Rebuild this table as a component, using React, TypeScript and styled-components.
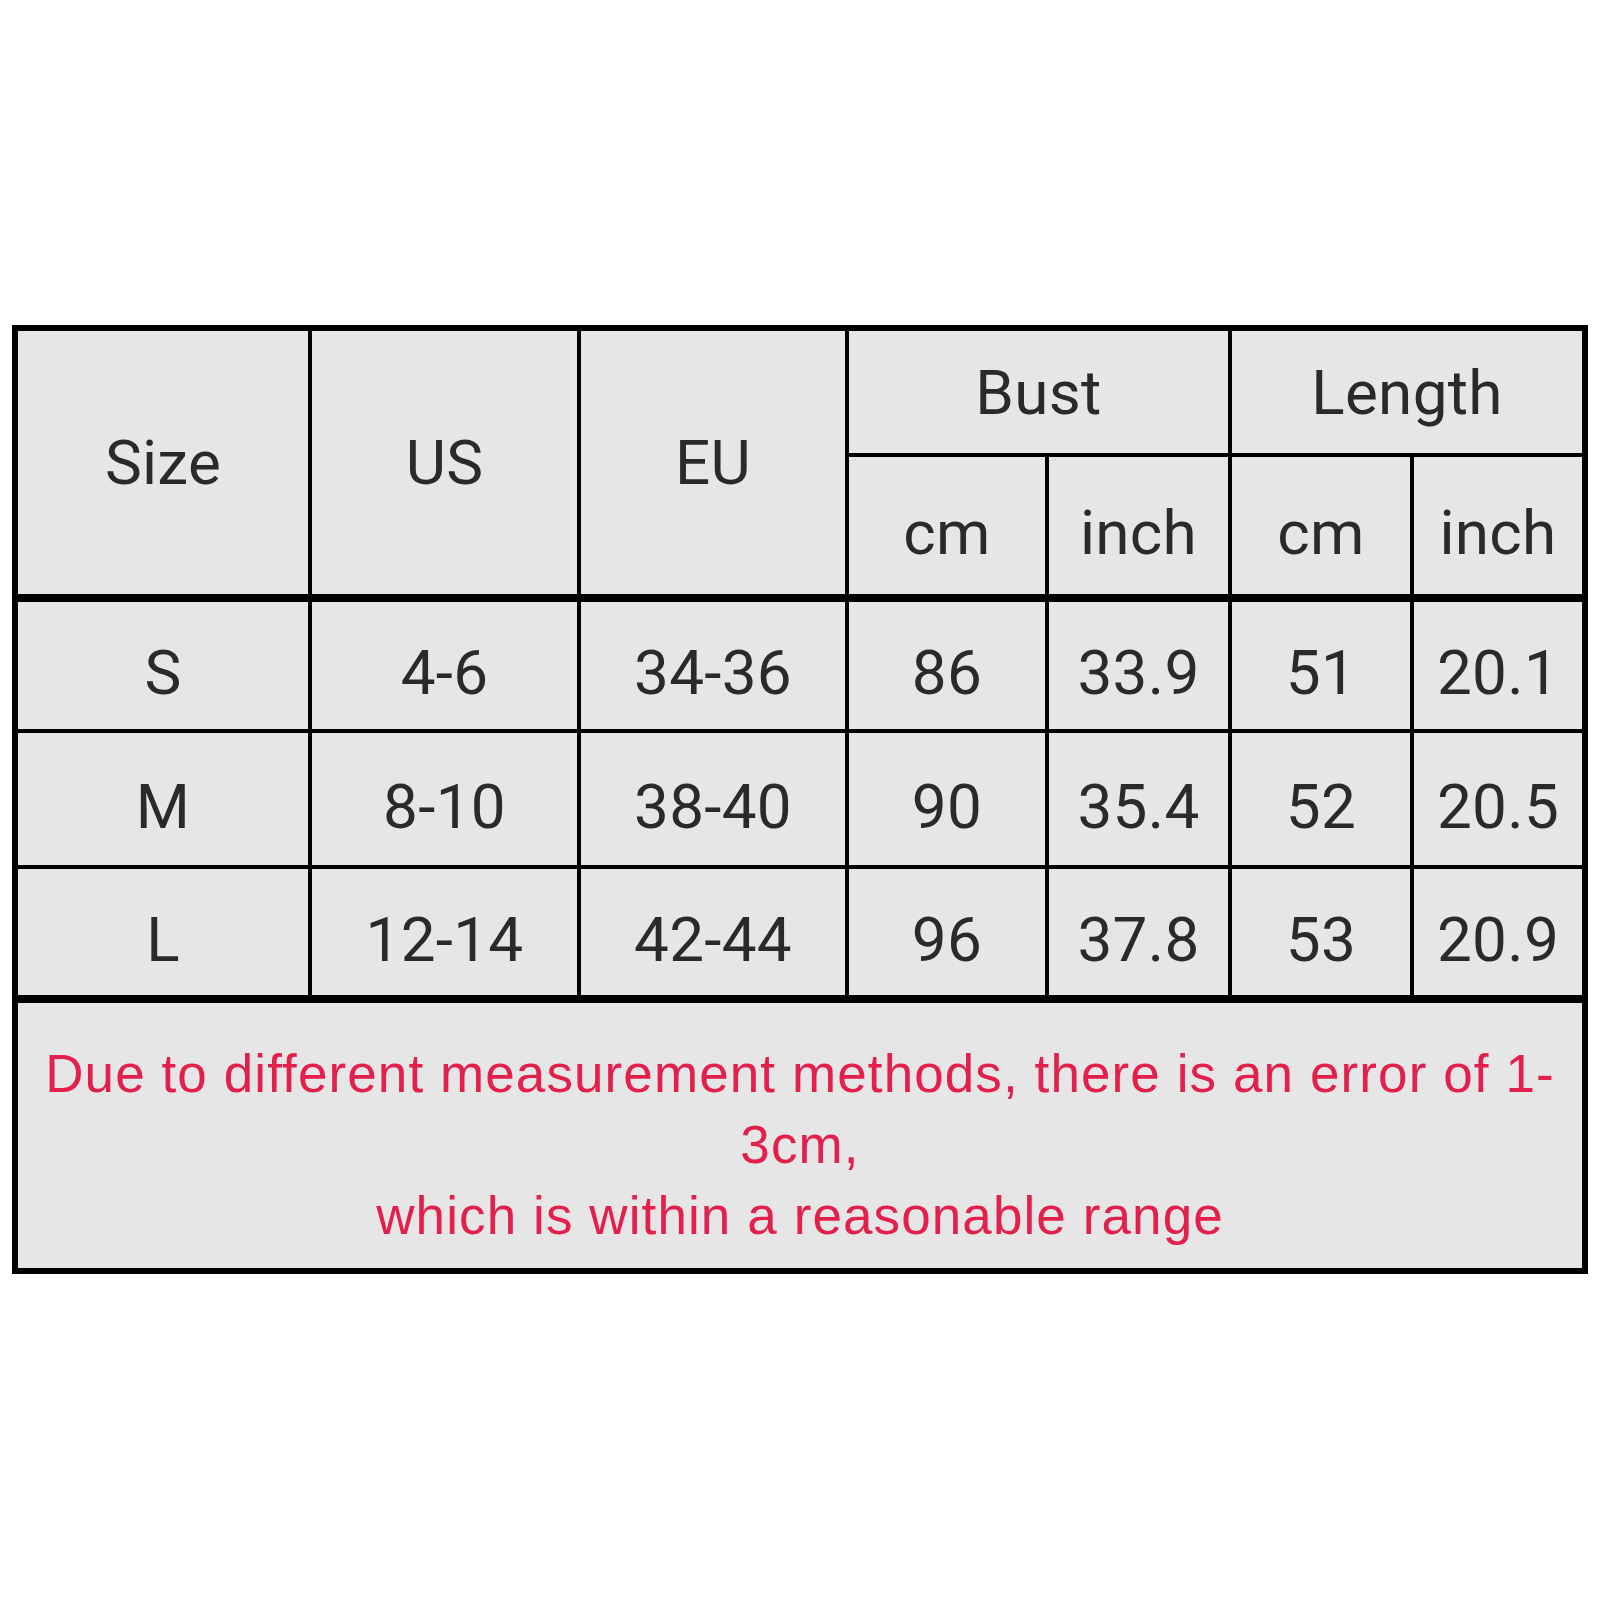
import React from 'react';
import styled, { createGlobalStyle } from 'styled-components';

const GlobalStyle = createGlobalStyle`
  html, body {
    margin: 0;
    padding: 0;
    background: #ffffff;
  }
`;

const Page = styled.div`
  padding: 325px 12px 0 12px;
  min-height: 1600px;
  box-sizing: border-box;
`;

const Table = styled.div`
  display: grid;
  grid-template-columns: 290px 265px 264px 196px 179px 178px 168px;
  grid-template-rows: 122px 137px 131px 132px 126px 269px;
  gap: 4px;
  width: fit-content;
  background: #000000;
  border: 6px solid #000000;
`;

const Cell = styled.div<{ $rows?: number; $cols?: number; $thick?: boolean; $low?: boolean }>`
  display: flex;
  align-items: center;
  justify-content: center;
  box-sizing: border-box;
  padding-top: ${({ $low }) => ($low ? '14px' : '0')};
  background: #e7e6e7;
  color: #2a2a2a;
  font-family: Roboto, 'Noto Sans', sans-serif;
  font-size: 62px;
  letter-spacing: 0.3px;
  grid-row: ${({ $rows }) => ($rows ? `span ${$rows}` : 'auto')};
  grid-column: ${({ $cols }) => ($cols === -1 ? '1 / -1' : $cols ? `span ${$cols}` : 'auto')};
  margin-top: ${({ $thick }) => ($thick ? '4px' : '0')};
`;

const Note = styled.p`
  margin: 0;
  padding-top: 18px;
  text-align: center;
  color: #e31f4b;
  font-family: 'Liberation Sans', Arial, sans-serif;
  font-size: 53px;
  line-height: 71px;
  letter-spacing: 1.1px;
  white-space: nowrap;
`;

const rows = [
  ['S', '4-6', '34-36', '86', '33.9', '51', '20.1'],
  ['M', '8-10', '38-40', '90', '35.4', '52', '20.5'],
  ['L', '12-14', '42-44', '96', '37.8', '53', '20.9'],
];

export default function App() {
  return (
    <Page>
      <GlobalStyle />
      <Table>
        <Cell $rows={2}>Size</Cell>
        <Cell $rows={2}>US</Cell>
        <Cell $rows={2}>EU</Cell>
        <Cell $cols={2}>Bust</Cell>
        <Cell $cols={2}>Length</Cell>
        <Cell $low>cm</Cell>
        <Cell $low>inch</Cell>
        <Cell $low>cm</Cell>
        <Cell $low>inch</Cell>
        {rows.map((row, r) =>
          row.map((value, c) => (
            <Cell key={`${r}-${c}`} $thick={r === 0} $low>
              {value}
            </Cell>
          ))
        )}
        <Cell $cols={-1} $thick>
          <Note>
            Due to different measurement methods, there is an error of 1-
            <br />
            3cm,
            <br />
            which is within a reasonable range
          </Note>
        </Cell>
      </Table>
    </Page>
  );
}
